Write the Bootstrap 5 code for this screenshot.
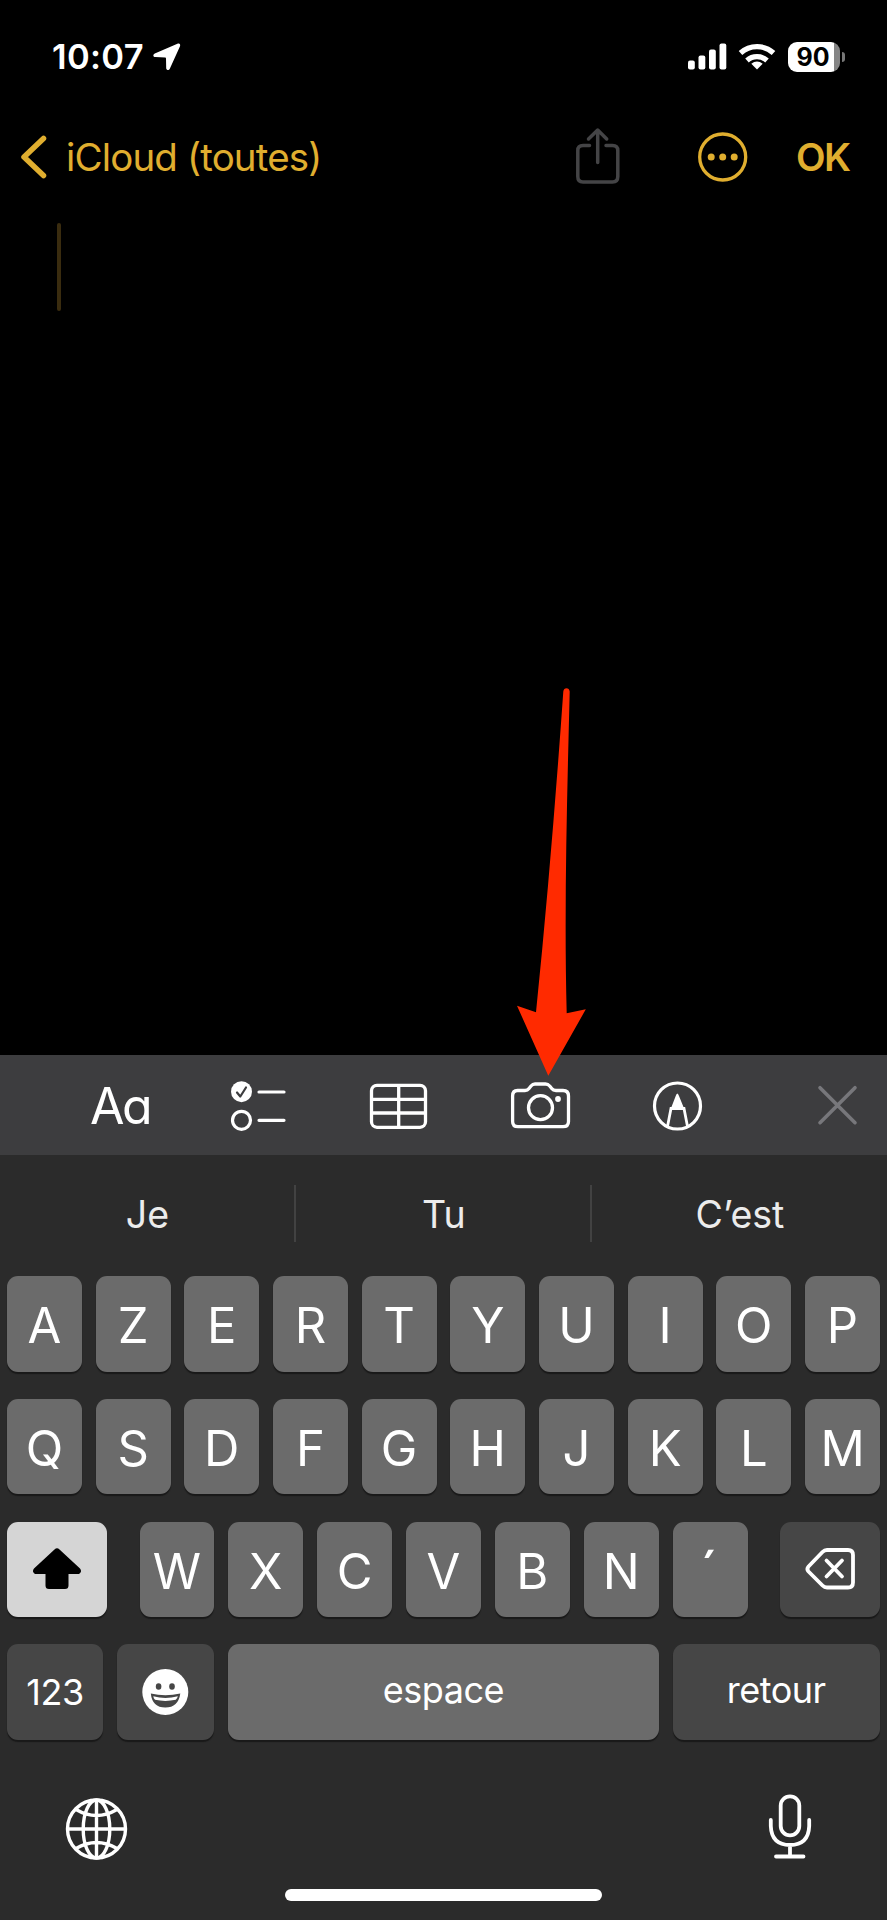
<!DOCTYPE html>
<html lang="fr" data-bs-theme="dark">
<head>
<meta charset="utf-8">
<meta name="viewport" content="width=device-width, initial-scale=1">
<title>Notes</title>
<link rel="stylesheet" href="https://cdn.jsdelivr.net/npm/bootstrap@5.3.0/dist/css/bootstrap.min.css">
<style>
  :root { --gold: #e0ae2f; --key: #6b6b6b; --key-dark: #464646; }
  body { background: #000; color: #fff; font-family: Inter, "Liberation Sans", sans-serif; line-height: 1; }
  svg { display: block; flex: none; overflow: visible; }
  .phone { width: 887px; height: 1920px; }
  .status { height: 114px; padding: 0 42px 0 52px; }
  .clock { font-size: 34.5px; font-weight: 600; width: 101px; letter-spacing: .3px; }
  .charge { width: 52px; height: 30px; border-radius: 9px; color: #000; font-size: 25px; font-weight: 700; background: linear-gradient(to right, #fff 46px, #858585 46px); padding-right: 2px; }
  .nub { width: 3px; height: 10px; border-radius: 0 4px 4px 0; background: #777; margin-left: 2px; }
  .topnav { height: 88px; padding: 0 36px 2px 20px; color: var(--gold); font-size: 38.5px; }
  .back { color: var(--gold); gap: 18px; letter-spacing: -.85px; }
  .ok { font-weight: 600; margin-left: 48px; width: 55px; letter-spacing: -1.6px; }
  .editor { padding: 21px 57px; }
  .caret { width: 4px; height: 88px; border-radius: 2px; background: #3a2c0f; }
  .pointer { left: 510px; top: 680px; }
  .tools { height: 100px; background: #3d3d3f; padding: 2px 29px 0 90px; gap: 82px; }
  .format { width: 58px; font-size: 50px; font-weight: 400; font-feature-settings: "cv11"; letter-spacing: -2.5px; }
  .keyboard { height: 765px; background: #2b2b2b; }
  .suggest { height: 121px; padding: 30px 1px 0 0; font-size: 37.5px; color: #ececec; margin-left: -1px; }
  .suggest > div { height: 57px; padding: 11px 0 0 2px; }
  .suggest > div + div { border-left: 2px solid #424242; }
  .keys { padding: 0 7px; gap: 27.3px; }
  .keyrow { height: 95.5px; gap: 13.75px; }
  .key { background: var(--key); border-radius: 11px; box-shadow: 0 2px 1px #191919; font-size: 49px; flex: 1 1 0; padding-top: 4px; min-width: 0; }
  .word { font-size: 36px; padding: 0 0 4px; letter-spacing: -.5px; }
  .fn { background: var(--key-dark); }
  .shift { background: #d5d5d5; }
  .wide { flex: 0 0 100px; }
  .letters { gap: 13.9px; margin: 0 32.5px; }
  .accent { font-size: 57px; letter-spacing: 2px; padding-top: 6px; }
  .dock { padding: 53px 76px 0 66px; height: 149px; }
  .homebar { width: 317px; height: 12px; border-radius: 6px; background: #fff; }
</style>
</head>
<body>
<main class="phone d-flex flex-column position-relative overflow-hidden">
  <header class="status d-flex align-items-center">
    <span class="clock">10:07</span>
    <svg width="28" height="28" viewBox="0 0 28 28"><path d="M25 .5 1.800 10.500C-.3 11.600 0 14 2.400 14.100L12.200 14.500Q13 14.600 13 15.500L13.200 25.300C13.400 27.500 16 27.700 16.800 25.800L27 3.200C27.700 1.200 26.500 0 25 .5Z" fill="#fff"/></svg>
    <div class="d-flex align-items-center ms-auto">
      <svg width="39" height="28" viewBox="0 0 39 28" fill="#fff"><rect x="0" y="17.500" width="6.800" height="9" rx="2"/><rect x="10.500" y="12.500" width="6.800" height="14" rx="2"/><rect x="21" y="6.500" width="6.800" height="20" rx="2"/><rect x="31.500" y=".5" width="6.800" height="26" rx="2"/></svg>
      <svg class="ms-2 me-2" width="45" height="28" viewBox="735.500 42.500 45 28" fill="none" stroke="#fff" stroke-width="5.300"><path d="M741 52.500A24.500 24.500 0 0 1 774 52.500"/><path d="M747.500 60A15 15 0 0 1 767.500 60"/><path d="M757.500 69 751.800 63.300Q757.500 58.500 763.200 63.300Z" fill="#fff" stroke="none"/></svg>
      <div class="charge d-flex align-items-center justify-content-center">90</div>
      <div class="nub"></div>
    </div>
  </header>

  <nav class="topnav d-flex align-items-center">
    <a class="back d-flex align-items-center text-decoration-none" href="#">
      <svg width="28" height="44" viewBox="0 0 28 44" fill="none" stroke="currentColor" stroke-width="5.500" stroke-linecap="round" stroke-linejoin="round"><path d="M23.500 3.500 4 22 23.500 40.500"/></svg>
      <span>iCloud (toutes)</span>
    </a>
    <svg class="ms-auto" width="44" height="56" viewBox="576 128.500 44 56" fill="none" stroke="#444446" stroke-width="3.500" stroke-linecap="round" stroke-linejoin="round"><path d="M589.500 145H583Q577.800 145 577.800 150V176Q577.800 181.500 583 181.500H612.500Q617.800 181.500 617.800 176V150Q617.800 145 612.500 145H606M597.700 162V130M588.500 138.500 597.700 129.500 606.700 138.500"/></svg>
    <svg style="margin-left:78px" width="50" height="50" viewBox="0 0 50 50"><circle cx="24.700" cy="25" r="23" fill="none" stroke="currentColor" stroke-width="3.300"/><g fill="currentColor"><circle cx="13.200" cy="25" r="3.500"/><circle cx="24.700" cy="25" r="3.500"/><circle cx="36.200" cy="25" r="3.500"/></g></svg>
    <span class="ok">OK</span>
  </nav>

  <section class="editor flex-grow-1"><div class="caret"></div></section>

  <div class="tools d-flex align-items-center">
    <span class="format">Aa</span>
    <svg width="57" height="50" viewBox="230 1081 57 50" fill="none" stroke="#fff" stroke-width="3.200" stroke-linecap="round" stroke-linejoin="round"><circle cx="241.500" cy="1091.700" r="10.500" fill="#fff" stroke="none"/><path d="M237 1092.500 240.300 1096.500 246 1087.500" stroke="#3d3d3f" stroke-width="2.200"/><circle cx="241.500" cy="1120.300" r="9"/><path d="M259 1092H284M259 1120.300H284"/></svg>
    <svg width="59" height="50" viewBox="369 1081 59 50" fill="none" stroke="#fff" stroke-width="3.300"><rect x="371.500" y="1085.300" width="54" height="42" rx="5.500"/><path d="M398.700 1085V1127M371.500 1099.300H425.500M371.500 1113H425.500"/></svg>
    <svg width="61" height="50" viewBox="510 1081 61 50" fill="none" stroke="#fff" stroke-width="3.300" stroke-linejoin="round"><path d="M517.500 1090.500H525Q527.500 1090.500 529 1088.500L531 1086Q532.700 1084 535 1084H545.500Q548 1084 549.700 1086L551.700 1088.500Q553.200 1090.500 556 1090.500H563Q568.500 1090.500 568.500 1096V1121.500Q568.500 1126.700 563 1126.700H518Q512.600 1126.700 512.600 1121.500V1096Q512.600 1090.500 517.500 1090.500Z"/><circle cx="540.500" cy="1107.700" r="12"/><circle cx="558" cy="1099" r="2.900" fill="#fff" stroke="none"/></svg>
    <svg width="49" height="50" viewBox="653 1081 49 50" fill="none" stroke="#fff" stroke-width="3.200"><circle cx="677.500" cy="1106" r="23"/><path d="M667.500 1126.500 671 1108.500H684L687.500 1126.500" stroke-width="2.800"/><path d="M677.300 1093.500Q678.200 1093.500 679 1096L684.500 1109.500H670.500L675.700 1096Q676.500 1093.500 677.300 1093.500Z" fill="#fff" stroke="none"/></svg>
    <svg class="ms-auto" width="41" height="40" viewBox="817 1086 41 40" fill="none" stroke="#77777b" stroke-width="3.600" stroke-linecap="round"><path d="M820 1087.700 855 1122.700M855 1087.700 820 1122.700"/></svg>
  </div>

  <section class="keyboard">
    <div class="suggest d-flex text-center">
      <div class="flex-fill w-100">Je</div><div class="flex-fill w-100">Tu</div><div class="flex-fill w-100">C’est</div>
    </div>
    <div class="keys d-flex flex-column">
      <div class="keyrow d-flex">
        <div class="key d-flex align-items-center justify-content-center">A</div><div class="key d-flex align-items-center justify-content-center">Z</div><div class="key d-flex align-items-center justify-content-center">E</div><div class="key d-flex align-items-center justify-content-center">R</div><div class="key d-flex align-items-center justify-content-center">T</div><div class="key d-flex align-items-center justify-content-center">Y</div><div class="key d-flex align-items-center justify-content-center">U</div><div class="key d-flex align-items-center justify-content-center">I</div><div class="key d-flex align-items-center justify-content-center">O</div><div class="key d-flex align-items-center justify-content-center">P</div>
      </div>
      <div class="keyrow d-flex">
        <div class="key d-flex align-items-center justify-content-center">Q</div><div class="key d-flex align-items-center justify-content-center">S</div><div class="key d-flex align-items-center justify-content-center">D</div><div class="key d-flex align-items-center justify-content-center">F</div><div class="key d-flex align-items-center justify-content-center">G</div><div class="key d-flex align-items-center justify-content-center">H</div><div class="key d-flex align-items-center justify-content-center">J</div><div class="key d-flex align-items-center justify-content-center">K</div><div class="key d-flex align-items-center justify-content-center">L</div><div class="key d-flex align-items-center justify-content-center">M</div>
      </div>
      <div class="keyrow d-flex gap-0">
        <div class="key shift wide pt-0 d-flex align-items-center justify-content-center"><svg width="48" height="42" viewBox="0 0 48 42"><path d="M21.500 1.500Q24 -.8 26.500 1.500L47 20.500Q49.500 23.500 46 26H35.500V37.500Q35.500 41 32 41H16Q12.500 41 12.500 37.500V26H2Q-1.500 23.500 1 20.500Z" fill="#000"/></svg></div>
        <div class="letters d-flex flex-grow-1">
          <div class="key d-flex align-items-center justify-content-center">W</div><div class="key d-flex align-items-center justify-content-center">X</div><div class="key d-flex align-items-center justify-content-center">C</div><div class="key d-flex align-items-center justify-content-center">V</div><div class="key d-flex align-items-center justify-content-center">B</div><div class="key d-flex align-items-center justify-content-center">N</div><div class="key accent d-flex align-items-center justify-content-center">´</div>
        </div>
        <div class="key fn wide pt-0 d-flex align-items-center justify-content-center"><svg width="49" height="42" viewBox="0 0 49 42" fill="none" stroke="#fff" stroke-width="3.800" stroke-linecap="round" stroke-linejoin="round"><path d="M21 2H42Q47 2 47 7V34.500Q47 39.500 42 39.500H21Q18.500 39.500 16.500 37.500L2.500 23.500Q.3 21 2.500 18.500L16.500 4Q18.500 2 21 2ZM20.500 12.500 36 28.500M36 12.500 20.500 28.500"/></svg></div>
      </div>
      <div class="keyrow d-flex">
        <div class="key fn word d-flex align-items-center justify-content-center pb-0" style="flex:0 0 96px">123</div>
        <div class="key fn pt-0 d-flex align-items-center justify-content-center" style="flex:0 0 97.500px"><svg width="46" height="46" viewBox=".7 0 46 46"><circle cx="23" cy="23" r="23" fill="#fff"/><g fill="#464646"><ellipse cx="16.300" cy="17.500" rx="2.800" ry="3.300"/><ellipse cx="29.700" cy="17.500" rx="2.800" ry="3.300"/><path d="M8.500 24.500Q23 28 38 24.500Q36 38.500 23 38.500Q10 38.500 8.500 24.500Z"/></g><path d="M11 27.300Q23 30.500 35.500 27.300Q35 29.800 33.500 30.800Q23 33 12.700 30.800Q11.200 29.500 11 27.300Z" fill="#fff"/></svg></div>
        <div class="key word d-flex align-items-center justify-content-center">espace</div>
        <div class="key fn word d-flex align-items-center justify-content-center" style="flex:0 0 207.500px">retour</div>
      </div>
    </div>
    <div class="dock d-flex justify-content-between">
      <svg style="margin-top:6px" width="60" height="60" viewBox="66 1799 60 60" fill="none" stroke="#fff" stroke-width="3.400"><circle cx="96.500" cy="1829" r="29"/><ellipse cx="96.500" cy="1829" rx="13.300" ry="29"/><path d="M96.500 1800V1858M67.500 1829H125.500M76 1809.500Q96.500 1821.500 117 1809.500M76 1848.500Q96.500 1836.500 117 1848.500"/></svg>
      <svg style="margin-top:1px" width="42" height="66" viewBox="769 1794 42 66" fill="none" stroke="#fff" stroke-width="3.800" stroke-linecap="round" stroke-linejoin="round"><rect x="780.700" y="1796.300" width="18.600" height="39" rx="9.300"/><path d="M770.800 1820V1826Q771.500 1845 790 1845Q808.500 1845 809.200 1826V1820M790 1845V1856.500M776 1856.500H803.500"/></svg>
    </div>
    <div class="homebar mx-auto"></div>
  </section>

  <!-- annotation arrow pointing at the camera button -->
  <svg class="pointer position-absolute" width="80" height="400" viewBox="510 680 80 400"><path d="M563.300 691.500C563.500 687 569.500 687 569.700 691.500C567 800 564 910 566.700 1013.300L585.800 1009.300 548.300 1075.800 517 1005.700 536 1012.300C547 905 556 795 563.300 691.500Z" fill="#ff2a00"/></svg>
</main>
<script src="https://cdn.jsdelivr.net/npm/bootstrap@5.3.0/dist/js/bootstrap.bundle.min.js"></script>
</body>
</html>
